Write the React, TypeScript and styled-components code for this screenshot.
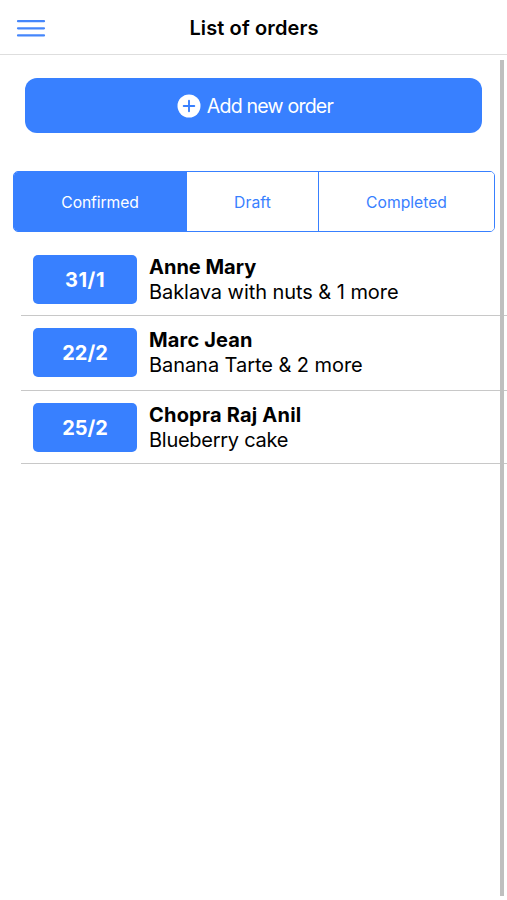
import React from "react";
import styled, { createGlobalStyle } from "styled-components";

const Global = createGlobalStyle`
  * { box-sizing: border-box; }
  html, body { margin: 0; background: #fff; overflow: hidden; }
`;
const Screen = styled.div`
  position: relative;
  width: 507px;
  height: 900px;
  overflow: hidden;
  background: #fff;
  color: #000;
  font-family: Inter, sans-serif;
`;
const Header = styled.header`
  display: grid;
  grid-template-columns: 62px 1fr 62px;
  align-items: center;
  height: 55px;
  border-bottom: 1px solid #dedede;
`;
const MenuButton = styled.button`
  display: flex;
  padding: 2px 0 0 16px;
  border: 0;
  background: none;
`;
const Title = styled.h1`
  display: flex;
  justify-content: center;
  margin: 0;
  padding: 1px 0 0 1px;
`;
const Label = styled.span<{ $size: number; $weight?: number; $track?: number }>`
  font-size: ${(p) => p.$size}px;
  font-weight: ${(p) => p.$weight ?? 400};
  letter-spacing: ${(p) => p.$track ?? 0}px;
  white-space: nowrap;
`;
const AddButton = styled.button`
  display: flex;
  align-items: center;
  justify-content: center;
  gap: 6px;
  width: 457px;
  height: 55px;
  margin: 23px 0 0 25.4px;
  padding: 0 0 0 2px;
  border: 0;
  border-radius: 12px;
  background: #3880ff;
  color: #fff;
  font-family: inherit;
`;
const Tabs = styled.div`
  display: grid;
  grid-template-columns: 173px 132px 1fr;
  width: 482px;
  height: 61px;
  margin: 38px 0 0 13px;
  border: 1px solid #3880ff;
  border-radius: 5px;
  overflow: hidden;
`;
const Tab = styled.button<{ $active?: boolean }>`
  padding: 2px 0 0;
  border: 0;
  border-right: 1px solid #3880ff;
  background: ${(p) => (p.$active ? "#3880ff" : "#fff")};
  color: ${(p) => (p.$active ? "#fff" : "#3880ff")};
  font-family: inherit;
  &:last-child { border-right: 0; }
`;
const List = styled.ul`
  display: grid;
  grid-template-rows: 74px 75px 73px;
  margin: 10px 0 0 21px;
  padding: 0;
  list-style: none;
`;
const Row = styled.li`
  display: flex;
  align-items: center;
  gap: 12px;
  padding: 1px 0 0 12px;
  border-bottom: 1px solid #c8c8c8;
  &:first-child { padding-top: 2px; }
  &:nth-child(2) { padding-top: 0; padding-bottom: 1px; }
`;
const DateBadge = styled.div`
  display: grid;
  place-items: center;
  width: 104px;
  height: 49px;
  border-radius: 5px;
  background: #3880ff;
  color: #fff;
`;
const Details = styled.div`
  display: flex;
  flex-direction: column;
  line-height: 24.5px;
`;
const Scrollbar = styled.div`
  position: absolute;
  top: 60px;
  right: 3px;
  width: 4px;
  height: 836px;
  background: #bfbfbf;
`;

const orders = [
  { date: "31/1", dateTrack: 0.55, name: "Anne Mary", nameTrack: 0, items: "Baklava with nuts & 1 more", itemsTrack: -0.06 },
  { date: "22/2", dateTrack: 0, name: "Marc Jean", nameTrack: 0.16, items: "Banana Tarte & 2 more", itemsTrack: -0.06 },
  { date: "25/2", dateTrack: 0, name: "Chopra Raj Anil", nameTrack: 0.2, items: "Blueberry cake", itemsTrack: -0.27 },
];

export default function App() {
  return (
    <Screen>
      <Global />
      <Header>
        <MenuButton aria-label="Menu">
          <svg width="30" height="20" viewBox="0 0 30 20" stroke="#4586fb" strokeWidth="2.2" strokeLinecap="round">
            <path d="M2 3.2H28M2 10.3H28M2 17.4H28" />
          </svg>
        </MenuButton>
        <Title><Label $size={20} $weight={600} $track={0.12}>List of orders</Label></Title>
      </Header>
      <AddButton>
        <svg width="24" height="24" viewBox="0 0 24 24">
          <circle cx="12" cy="12" r="11.5" fill="#fff" />
          <path d="M12 6.7V17.3M6.7 12H17.3" stroke="#3880ff" strokeWidth="1.9" strokeLinecap="round" />
        </svg>
        <Label $size={19.6} $weight={420} $track={-0.82}>Add new order</Label>
      </AddButton>
      <Tabs>
        <Tab $active><Label $size={15.7} $track={-0.12}>Confirmed</Label></Tab>
        <Tab><Label $size={15.7} $track={0.1}>Draft</Label></Tab>
        <Tab><Label $size={15.7}>Completed</Label></Tab>
      </Tabs>
      <List>
        {orders.map((o) => (
          <Row key={o.date}>
            <DateBadge><Label $size={20} $weight={700} $track={o.dateTrack}>{o.date}</Label></DateBadge>
            <Details>
              <Label $size={20} $weight={700} $track={o.nameTrack}>{o.name}</Label>
              <Label $size={20} $track={o.itemsTrack}>{o.items}</Label>
            </Details>
          </Row>
        ))}
      </List>
      <Scrollbar />
    </Screen>
  );
}
